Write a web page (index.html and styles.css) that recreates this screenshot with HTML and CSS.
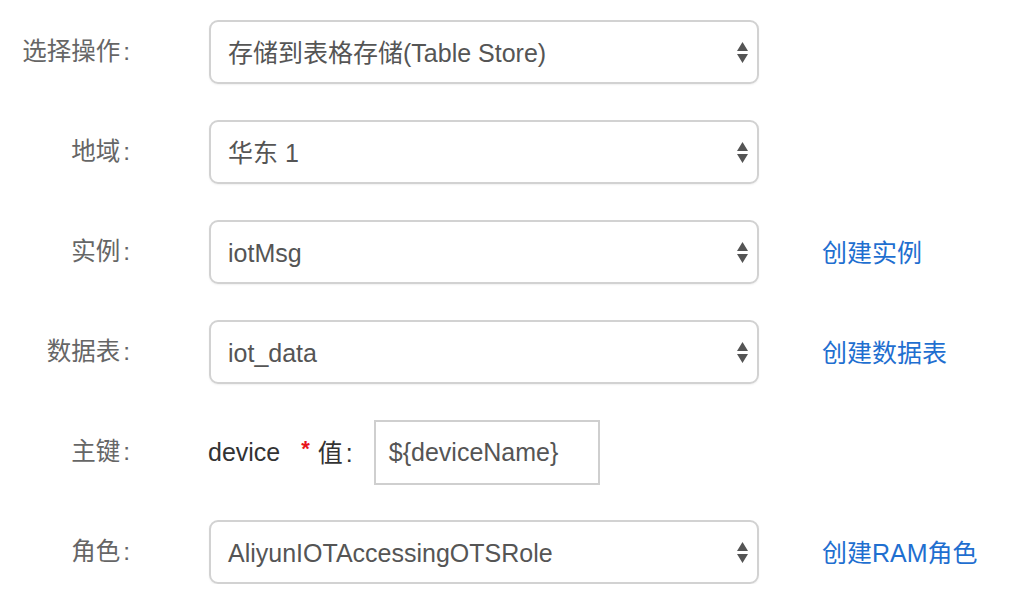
FILE: index.html
```html
<!DOCTYPE html>
<html lang="zh-CN">
<head>
<meta charset="utf-8">
<title>Table Store</title>
<link rel="stylesheet" href="styles.css">
</head>
<body>
<form class="form">
  <div class="row">
    <label class="label">选择操作<span class="colon">:</span></label>
    <div class="select"><span class="select-text">存储到表格存储(Table Store)</span><svg class="arrows" width="11" height="22" viewBox="0 0 11 22"><path d="M5.5 0 L11 9 L0 9 Z M0 12 L11 12 L5.5 21 Z" fill="#555"/></svg></div>
  </div>
  <div class="row">
    <label class="label">地域<span class="colon">:</span></label>
    <div class="select"><span class="select-text">华东 1</span><svg class="arrows" width="11" height="22" viewBox="0 0 11 22"><path d="M5.5 0 L11 9 L0 9 Z M0 12 L11 12 L5.5 21 Z" fill="#555"/></svg></div>
  </div>
  <div class="row">
    <label class="label">实例<span class="colon">:</span></label>
    <div class="select"><span class="select-text">iotMsg</span><svg class="arrows" width="11" height="22" viewBox="0 0 11 22"><path d="M5.5 0 L11 9 L0 9 Z M0 12 L11 12 L5.5 21 Z" fill="#555"/></svg></div>
    <a class="link" href="#">创建实例</a>
  </div>
  <div class="row">
    <label class="label">数据表<span class="colon">:</span></label>
    <div class="select"><span class="select-text">iot_data</span><svg class="arrows" width="11" height="22" viewBox="0 0 11 22"><path d="M5.5 0 L11 9 L0 9 Z M0 12 L11 12 L5.5 21 Z" fill="#555"/></svg></div>
    <a class="link" href="#">创建数据表</a>
  </div>
  <div class="row">
    <label class="label">主键<span class="colon">:</span></label>
    <span class="key-name">device</span>
    <span class="required">*</span>
    <span class="value-label">值<span class="colon">:</span></span>
    <div class="input">${deviceName}</div>
  </div>
  <div class="row">
    <label class="label">角色<span class="colon">:</span></label>
    <div class="select"><span class="select-text">AliyunIOTAccessingOTSRole</span><svg class="arrows" width="11" height="22" viewBox="0 0 11 22"><path d="M5.5 0 L11 9 L0 9 Z M0 12 L11 12 L5.5 21 Z" fill="#555"/></svg></div>
    <a class="link" href="#">创建RAM角色</a>
  </div>
</form>
</body>
</html>
```

FILE: styles.css
```css
html, body {
  margin: 0;
  padding: 0;
  background: #fff;
}
body {
  font-family: "Liberation Sans", "Noto Sans CJK SC", sans-serif;
  font-size: 25px;
  color: #555;
}
.form {
  display: flex;
  flex-direction: column;
  gap: 36px;
  padding-top: 20px;
}
.row {
  display: flex;
  align-items: center;
  height: 64px;
}
.label {
  width: 130px;
  text-align: right;
  color: #666;
  margin-right: 79px;
  margin-top: -5px;
  font-size: 24.5px;
}
.colon {
  margin-left: 3px;
}
.select {
  box-sizing: border-box;
  width: 550px;
  height: 64px;
  border: 2px solid #d2d2d2;
  border-radius: 9px;
  box-shadow: 0 1px 2px rgba(0,0,0,0.06);
  display: flex;
  align-items: center;
  justify-content: space-between;
  padding: 0 9px 0 17px;
  color: #555;
}
.select-text {
  line-height: 1;
  margin-top: 2px;
}
.arrows {
  display: block;
  margin-top: 1px;
}
.link {
  margin-left: 63px;
  color: #1f6fd0;
  text-decoration: none;
  margin-top: -3px;
}
.key-name {
  color: #333;
  margin-left: -1px;
}
.required {
  color: #e8141b;
  font-size: 22px;
  font-weight: bold;
  margin-left: 21px;
  margin-top: -6px;
}
.value-label {
  color: #333;
  margin-left: 8px;
  margin-top: -2px;
}
.value-label .colon {
  margin-left: 3px;
}
.input {
  box-sizing: border-box;
  margin-left: 21px;
  width: 226px;
  height: 65px;
  border: 2px solid #cfcfcf;
  display: flex;
  align-items: center;
  padding-left: 13px;
  color: #555;
}
```
